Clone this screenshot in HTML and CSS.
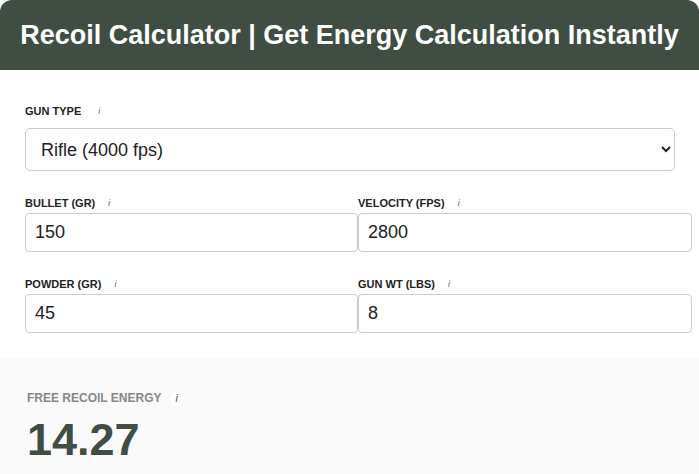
FILE: index.html
```html
<!DOCTYPE html>
<html lang="en">
<head>
    <meta charset="utf-8">
    <meta content="width=device-width, initial-scale=1" name="viewport">
    <title>Recoil Calculator</title>
    <link rel="stylesheet" href="styles.css">
</head>
<body>
<div class="calc">
    <h1 class="calc-title">Recoil Calculator | Get Energy Calculation Instantly</h1>

    <div class="calc-form">
        <div class="field field-wide">
            <label class="field-label" for="gun_type">GUN TYPE <span class="info">i</span></label>
            <select id="gun_type" class="field-select">
                <option>Rifle (4000 fps)</option>
                <option>Handgun (1600 fps)</option>
                <option>Shotgun (1600 fps)</option>
            </select>
        </div>

        <div class="field-row">
            <div class="field">
                <label class="field-label" for="bullet">BULLET (GR) <span class="info">i</span></label>
                <input id="bullet" class="field-input" type="text" value="150">
            </div>
            <div class="field">
                <label class="field-label" for="velocity">VELOCITY (FPS) <span class="info">i</span></label>
                <input id="velocity" class="field-input" type="text" value="2800">
            </div>
        </div>

        <div class="field-row">
            <div class="field">
                <label class="field-label" for="powder">POWDER (GR) <span class="info">i</span></label>
                <input id="powder" class="field-input" type="text" value="45">
            </div>
            <div class="field">
                <label class="field-label" for="gun_wt">GUN WT (LBS) <span class="info">i</span></label>
                <input id="gun_wt" class="field-input" type="text" value="8">
            </div>
        </div>
    </div>

    <div class="result">
        <div class="result-label">FREE RECOIL ENERGY <span class="info">i</span></div>
        <div class="result-value" id="result">14.27</div>
    </div>
</div>

<script>
    // free recoil energy, ft-lbs
    function calc() {
        const bullet = parseFloat(document.getElementById('bullet').value) || 0;
        const velocity = parseFloat(document.getElementById('velocity').value) || 0;
        const powder = parseFloat(document.getElementById('powder').value) || 0;
        const weight = parseFloat(document.getElementById('gun_wt').value) || 0;
        if (!weight) return;
        const gasVel = 4000;
        const momentum = (bullet * velocity + powder * gasVel) / 7000;
        const gunVel = momentum / weight;
        const energy = weight * gunVel * gunVel / 64.348;
        document.getElementById('result').innerText = energy.toFixed(2);
    }

    const inputs = document.querySelectorAll('.field-input');
    for (let i = 0; i < inputs.length; i++) {
        inputs[i].addEventListener('input', calc);
    }
</script>
</body>
</html>
```

FILE: styles.css
```css
body {
    margin: 0;
    font-family: "Liberation Sans", Arial, sans-serif;
    color: #222;
    background: #fff;
}

.calc {
    width: 699px;
}

.calc-title {
    margin: 0;
    height: 70px;
    display: flex;
    align-items: center;
    justify-content: center;
    background-color: #3f4d42;
    color: #fff;
    font-size: 27px;
    font-weight: bold;
    border-radius: 12px 12px 0 0;
}

.calc-form {
    padding: 34px 25px 25px;
    display: flex;
    flex-direction: column;
    gap: 25px;
}

.field-row {
    display: grid;
    grid-template-columns: 333px 334px;
}

.field-label {
    display: block;
    font-size: 11px;
    line-height: 14px;
    font-weight: bold;
    margin-bottom: 3px;
}

.field-wide .field-label {
    margin-bottom: 10px;
}

.field-wide .field-label .info {
    margin-left: 8px;
}

.info {
    display: inline-block;
    width: 14px;
    height: 14px;
    margin-left: 4px;
    border-radius: 50%;
    background: #fff;
    color: #666;
    font-size: 9px;
    font-style: italic;
    font-weight: normal;
    text-align: center;
    line-height: 14px;
    vertical-align: top;
}

.field-select {
    width: 650px;
    height: 43px;
    padding: 0 10px 0 11px;
    font-family: inherit;
    font-size: 18px;
    color: #222;
    background: #fff;
    border: 1px solid #ccc;
    border-radius: 5px;
}

.field-input {
    box-sizing: border-box;
    width: 100%;
    height: 39px;
    padding: 0 9px;
    font-family: inherit;
    font-size: 18px;
    color: #222;
    border: 1px solid #ccc;
    border-radius: 4px;
    outline: none;
}

.result {
    background-color: #fafafa;
    padding: 32px 27px 20px;
    min-height: 80px;
}

.result-label {
    font-size: 12px;
    line-height: 16px;
    font-weight: bold;
    color: #888;
    margin-bottom: 12px;
}

.result-label .info {
    margin-left: 5px;
    color: #444;
    font-size: 10px;
    vertical-align: middle;
}

.result-value {
    font-size: 45px;
    line-height: 44px;
    font-weight: bold;
    color: #3f4d42;
}
```
